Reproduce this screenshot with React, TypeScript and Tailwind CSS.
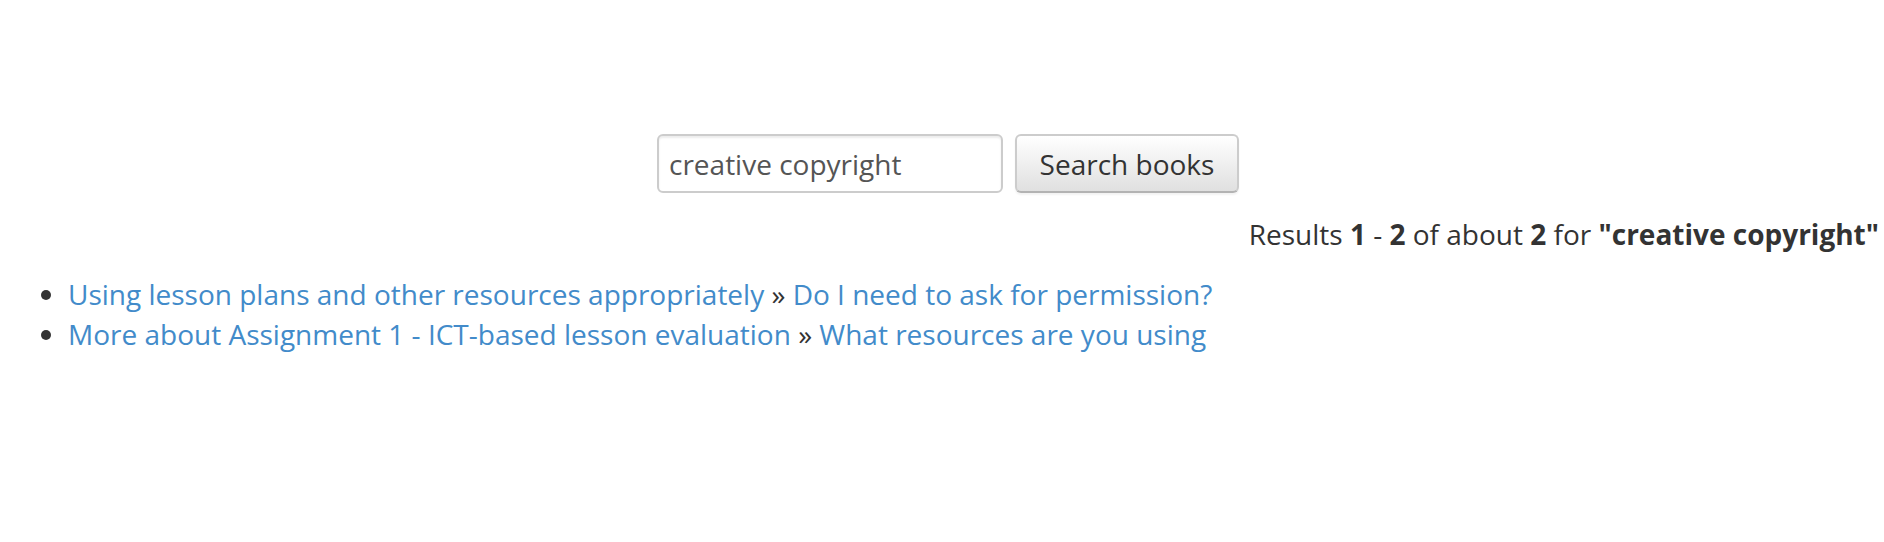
import React from "react";

const results = [
  {
    book: "Using lesson plans and other resources appropriately",
    chapter: "Do I need to ask for permission?",
  },
  {
    book: "More about Assignment 1 - ICT-based lesson evaluation",
    chapter: "What resources are you using",
  },
];

const font = { fontFamily: '"Open Sans", "Liberation Sans", sans-serif' };

export default function App() {
  return (
    <div
      className="min-h-[542px] w-full bg-white text-[28px] leading-[40px] text-[#333333]"
      style={font}
    >
      {/* Search form */}
      <form className="flex justify-center gap-3 pt-[134px] pl-[12px]" onSubmit={(e) => e.preventDefault()}>
        <input
          defaultValue="creative copyright"
          className="h-[59px] w-[346px] rounded-[6px] border-2 border-[#cccccc] bg-white px-[10px] text-[28px] text-[#555555] shadow-[inset_0_2px_2px_rgba(0,0,0,0.075)] outline-none"
          style={font}
        />
        <button
          type="submit"
          className="h-[59px] w-[224px] rounded-[6px] border-2 border-[#cccccc] border-b-[#b3b3b3] bg-gradient-to-b from-white to-[#e0e0e0] text-[28px] text-[#333333] shadow-[0_2px_2px_rgba(0,0,0,0.05)]"
          style={font}
        >
          Search books
        </button>
      </form>

      {/* Summary */}
      <div className="mt-[21px] pr-[5px] text-right">
        Results <b>1</b> - <b>2</b> of about <b>2</b> for <b>"creative copyright"</b>
      </div>

      {/* Results list */}
      <ul className="mt-[20px] list-disc pl-[68px]">
        {results.map((r) => (
          <li key={r.book}>
            <a href="#" className="text-[#428bca]">
              {r.book}
            </a>{" "}
            » {" "}
            <a href="#" className="text-[#428bca]">
              {r.chapter}
            </a>
          </li>
        ))}
      </ul>
    </div>
  );
}
